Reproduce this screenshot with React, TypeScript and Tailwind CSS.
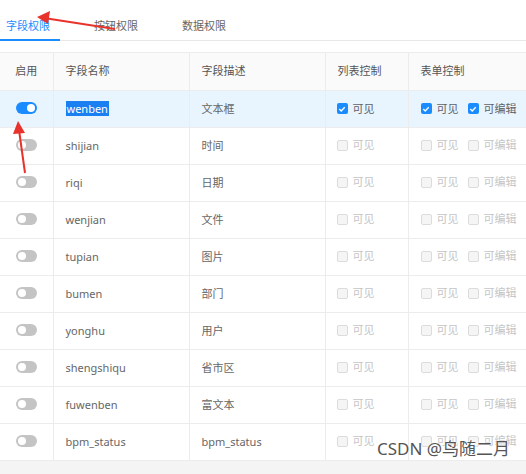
import React from 'react';

type Row = { name: string; desc: string; on?: boolean };

const rows: Row[] = [
  { name: 'wenben', desc: '文本框', on: true },
  { name: 'shijian', desc: '时间' },
  { name: 'riqi', desc: '日期' },
  { name: 'wenjian', desc: '文件' },
  { name: 'tupian', desc: '图片' },
  { name: 'bumen', desc: '部门' },
  { name: 'yonghu', desc: '用户' },
  { name: 'shengshiqu', desc: '省市区' },
  { name: 'fuwenben', desc: '富文本' },
  { name: 'bpm_status', desc: 'bpm_status' },
];

function Toggle({ on }: { on?: boolean }) {
  return (
    <span
      className={`relative inline-block w-[21px] h-[12px] rounded-full ${on ? 'bg-[#1a8cff]' : 'bg-[#c4c4c4]'}`}
    >
      <span
        className={`absolute top-[2px] w-[8px] h-[8px] rounded-full bg-white ${on ? 'right-[2px]' : 'left-[2px]'}`}
      />
    </span>
  );
}

function Check({ checked, label }: { checked?: boolean; label: string }) {
  return (
    <span className="inline-flex items-center gap-[5px]">
      {checked ? (
        <span className="w-[11px] h-[11px] rounded-[2px] bg-[#1a8cff] flex items-center justify-center">
          <svg width="8" height="8" viewBox="0 0 8 8">
            <path d="M1.3 4.1 L3.2 5.9 L6.7 2.2" stroke="white" strokeWidth="1.4" fill="none" />
          </svg>
        </span>
      ) : (
        <span className="w-[11px] h-[11px] rounded-[2px] border border-[#dcdcdc] bg-[#f5f5f5]" />
      )}
      <span className={checked ? 'text-[#606266]' : 'text-[#c5c5c5]'}>{label}</span>
    </span>
  );
}

export default function App() {
  return (
    <div
      className="relative w-[526px] h-[474px] bg-white overflow-hidden text-[11px] text-[#666]"
      style={{ fontFamily: '"Noto Sans", "Noto Sans CJK SC", sans-serif' }}
    >
      {/* tabs */}
      <div className="flex h-[41px] border-b border-[#e8e8e8]">
        <div className="relative w-[60px] flex items-center justify-center pt-[12px] pr-[4px] text-[#1a8cff]">
          字段权限
          <span className="absolute left-0 right-0 bottom-[-1px] h-[2px] bg-[#1a8cff]" />
        </div>
        <div className="flex items-center pt-[12px] ml-[34px] text-[#666]">按钮权限</div>
        <div className="flex items-center pt-[12px] ml-[44px] text-[#666]">数据权限</div>
      </div>

      <div className="h-[11px]" />

      <table className="w-[526px] border-collapse table-fixed">
        <colgroup>
          <col className="w-[53px]" />
          <col className="w-[136px]" />
          <col className="w-[136px]" />
          <col className="w-[83px]" />
          <col />
        </colgroup>
        <thead>
          <tr className="h-[38px] bg-[#fafafa] text-[#555]">
            <th className="font-normal text-center border-t border-b border-r border-[#ececec]">启用</th>
            <th className="font-normal text-left pl-[12px] border-t border-b border-r border-[#ececec]">字段名称</th>
            <th className="font-normal text-left pl-[12px] border-t border-b border-r border-[#ececec]">字段描述</th>
            <th className="font-normal text-left pl-[12px] border-t border-b border-r border-[#ececec]">列表控制</th>
            <th className="font-normal text-left pl-[12px] border-t border-b border-[#ececec]">表单控制</th>
          </tr>
        </thead>
        <tbody>
          {rows.map((r) => (
            <tr key={r.name} className={`h-[37px] ${r.on ? 'bg-[#e8f4fe]' : 'bg-white'}`}>
              <td className="text-center border-b border-r border-[#ececec] align-middle">
                <span className="inline-flex mt-[3px]">
                  <Toggle on={r.on} />
                </span>
              </td>
              <td className="pl-[12px] border-b border-r border-[#ececec]">
                {r.on ? <span className="bg-[#1a7ff0] text-white px-[1px]">{r.name}</span> : r.name}
              </td>
              <td className="pl-[12px] border-b border-r border-[#ececec]">{r.desc}</td>
              <td className="pl-[11px] border-b border-r border-[#ececec]">
                <Check checked={r.on} label="可见" />
              </td>
              <td className="pl-[12px] border-b border-[#ececec]">
                <span className="inline-flex gap-[9px]">
                  <Check checked={r.on} label="可见" />
                  <Check checked={r.on} label="可编辑" />
                </span>
              </td>
            </tr>
          ))}
        </tbody>
      </table>

      <div className="h-[14px] bg-[#f4f4f4]" />

      {/* annotation arrows */}
      <svg className="absolute left-0 top-0 pointer-events-none" width="526" height="474">
        <line x1="115" y1="29" x2="44" y2="18" stroke="#e8322c" strokeWidth="2" />
        <polygon points="37,17 50,11 48,24" fill="#e8322c" />
        <line x1="25" y1="173" x2="19" y2="130" stroke="#e8322c" strokeWidth="2" />
        <polygon points="18,121 13,134 25,133" fill="#e8322c" />
      </svg>

      {/* watermark */}
      <div
        className="absolute left-[377px] top-[436px] text-[17px] text-[#555] whitespace-nowrap"
        style={{ textShadow: '0 0 2px #fff, 0 0 2px #fff' }}
      >
        CSDN @鸟随二月
      </div>
    </div>
  );
}
